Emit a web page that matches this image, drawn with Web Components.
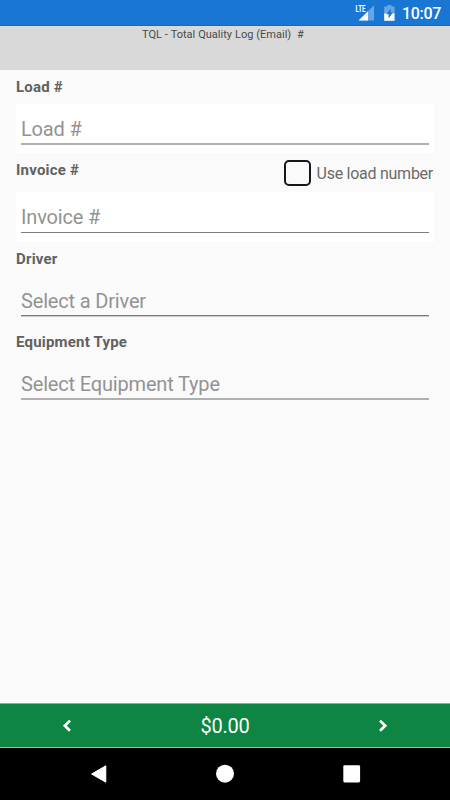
<!DOCTYPE html>
<html lang="en">
<head>
<meta charset="UTF-8">
<meta name="viewport" content="width=device-width, initial-scale=1.0">
<title>TQL - Total Quality Log</title>
<style>
    body {
        margin: 0;
        font-family: Roboto, "Liberation Sans", sans-serif;
    }
</style>
</head>
<body>
<invoice-screen></invoice-screen>
<script>
class StatusBar extends HTMLElement {
    connectedCallback() {
        this.attachShadow({ mode: 'open' });
        this.shadowRoot.innerHTML = `
            <style>
                :host {
                    display: flex;
                    justify-content: flex-end;
                    box-sizing: border-box;
                    height: 26px;
                    padding-right: 9px;
                    background: #1976d2;
                    border-bottom: 1px solid #1568c6;
                    color: #fff;
                }
                svg { display: block; }
                .signal { margin-right: 9px; }
                .battery { margin-right: 7px; }
                .time {
                    font-size: 16px;
                    font-weight: 500;
                    line-height: 28px;
                    letter-spacing: -0.3px;
                    width: 39px;
                    white-space: nowrap;
                }
            </style>
            <svg class="signal" width="20" height="25" viewBox="0 0 20 25">
                <path d="M19 5.2V20.6H3.6z" fill="#fff" opacity=".35"/>
                <path d="M13 11.2V20.6H3.6z" fill="#fff"/>
                <path d="M0 3H11V13H0z" fill="#1976d2"/>
                <text x="0.6" y="12.4" font-size="9.5" font-weight="700" textLength="10" lengthAdjust="spacingAndGlyphs" fill="#fff">LTE</text>
            </svg>
            <svg class="battery" width="11" height="25" viewBox="0 0 11 25">
                <path d="M3.5 5h4v1.6H10.6V13.6H.2V6.6H3.5z" fill="#fff" opacity=".35"/>
                <path d="M.2 13.4H10.6V20.8H.2z" fill="#fff"/>
                <path d="M6.6 8.4V12.6H8.8L4.6 18.6V14.3H2.4z" fill="#1976d2"/>
            </svg>
            <span class="time">10:07</span>
        `;
    }
}
customElements.define('status-bar', StatusBar);

class PageHeader extends HTMLElement {
    connectedCallback() {
        this.attachShadow({ mode: 'open' });
        this.shadowRoot.innerHTML = `
            <style>
                :host {
                    display: block;
                    box-sizing: border-box;
                    height: 44px;
                    padding-left: 142px;
                    background: #d9d9d9;
                    color: #4a4a4a;
                    font-size: 11px;
                    line-height: 17px;
                    letter-spacing: 0.01px;
                }
                .title {
                    display: block;
                    white-space: pre;
                    word-spacing: 0.2px;
                }
            </style>
            <span class="title"><slot></slot></span>
        `;
    }
}
customElements.define('page-header', PageHeader);

class FormField extends HTMLElement {
    connectedCallback() {
        this.attachShadow({ mode: 'open' });
        this.shadowRoot.innerHTML = `
            <style>
                :host {
                    display: block;
                    padding: 0 16px;
                }
                .head {
                    display: flex;
                    justify-content: space-between;
                    height: var(--head-height, 34px);
                }
                .label {
                    color: #616161;
                    font-size: 15px;
                    font-weight: 700;
                    line-height: 35px;
                    letter-spacing: 0.2px;
                }
                .box {
                    box-sizing: border-box;
                    height: var(--box-height, 49px);
                    padding: 0 5px;
                    background: var(--box-background, transparent);
                }
                .value {
                    box-sizing: border-box;
                    height: 41px;
                    border-bottom: 1px solid #7c7c7c;
                    color: #939393;
                    font-size: 20px;
                    line-height: 50px;
                    letter-spacing: -0.17px;
                    white-space: nowrap;
                }
                :host([soft]) .value {
                    border-bottom: 2px solid #b0b0b0;
                }
                :host([raised]) .value {
                    height: 40px;
                    box-shadow: 0 1px #cacaca;
                }
            </style>
            <div class="head">
                <span class="label">${this.getAttribute('label')}</span>
                <slot></slot>
            </div>
            <div class="box">
                <div class="value">${this.getAttribute('placeholder')}</div>
            </div>
        `;
    }
}
customElements.define('form-field', FormField);

class CheckOption extends HTMLElement {
    connectedCallback() {
        this.attachShadow({ mode: 'open' });
        this.shadowRoot.innerHTML = `
            <style>
                :host {
                    display: flex;
                    align-items: center;
                    gap: 6px;
                    height: 40px;
                    padding-right: 1px;
                    color: #6a6a6a;
                    font-size: 16px;
                    letter-spacing: -0.26px;
                    white-space: nowrap;
                }
                .square {
                    box-sizing: border-box;
                    width: 27px;
                    height: 26px;
                    border: 2px solid #15171b;
                    border-radius: 5px;
                }
            </style>
            <span class="square"></span>
            <span><slot></slot></span>
        `;
    }
}
customElements.define('check-option', CheckOption);

class TotalBar extends HTMLElement {
    connectedCallback() {
        this.attachShadow({ mode: 'open' });
        this.shadowRoot.innerHTML = `
            <style>
                :host {
                    display: grid;
                    grid-template-columns: 134px 1fr 134px;
                    align-items: center;
                    justify-items: center;
                    box-sizing: border-box;
                    height: 45px;
                    background: #0e8542;
                    border-top: 1px solid #84b294;
                    border-bottom: 1px solid #9cbca6;
                    color: #fff;
                    font-size: 20px;
                    letter-spacing: -0.2px;
                }
                svg { display: block; }
            </style>
            <svg width="10" height="14" viewBox="0 0 10 14"><path d="M8 1.6L2.8 6.7L8 11.8" fill="none" stroke="#fff" stroke-width="2.7"/></svg>
            <span><slot></slot></span>
            <svg width="10" height="14" viewBox="0 0 10 14"><path d="M2 1.6L7.2 6.7L2 11.8" fill="none" stroke="#fff" stroke-width="2.7"/></svg>
        `;
    }
}
customElements.define('total-bar', TotalBar);

class NavBar extends HTMLElement {
    connectedCallback() {
        this.attachShadow({ mode: 'open' });
        this.shadowRoot.innerHTML = `
            <style>
                :host {
                    display: flex;
                    justify-content: space-between;
                    align-items: center;
                    box-sizing: border-box;
                    height: 52px;
                    padding: 0 89px 0 90px;
                    background: #000;
                }
                svg { display: block; }
            </style>
            <svg width="18" height="20" viewBox="0 0 18 20"><path d="M15.8 1.8V18.2L1.6 10z" fill="#fff" stroke="#fff" stroke-linejoin="round"/></svg>
            <svg width="20" height="20" viewBox="0 0 20 20"><circle cx="9" cy="9.7" r="9" fill="#fff"/></svg>
            <svg width="18" height="20" viewBox="0 0 18 20"><rect x=".3" y="1.2" width="16.8" height="17.2" rx="1.3" fill="#fff"/></svg>
        `;
    }
}
customElements.define('nav-bar', NavBar);

class InvoiceScreen extends HTMLElement {
    connectedCallback() {
        this.attachShadow({ mode: 'open' });
        this.shadowRoot.innerHTML = `
            <style>
                :host {
                    display: flex;
                    flex-direction: column;
                    height: 800px;
                    width: 450px;
                    overflow: hidden;
                    background: #fafafa;
                }
                main { flex: 1; }
                .filled { --box-background: #fff; }
                .invoice {
                    --head-height: 39px;
                    --box-height: 50px;
                }
            </style>
            <status-bar></status-bar>
            <page-header>TQL - Total Quality Log (Email)  #</page-header>
            <main>
                <form-field class="filled" soft label="Load #" placeholder="Load #"></form-field>
                <form-field class="filled invoice" label="Invoice #" placeholder="Invoice #">
                    <check-option>Use load number</check-option>
                </form-field>
                <form-field raised label="Driver" placeholder="Select a Driver"></form-field>
                <form-field soft label="Equipment Type" placeholder="Select Equipment Type"></form-field>
            </main>
            <total-bar>$0.00</total-bar>
            <nav-bar></nav-bar>
        `;
    }
}
customElements.define('invoice-screen', InvoiceScreen);
</script>
</body>
</html>
